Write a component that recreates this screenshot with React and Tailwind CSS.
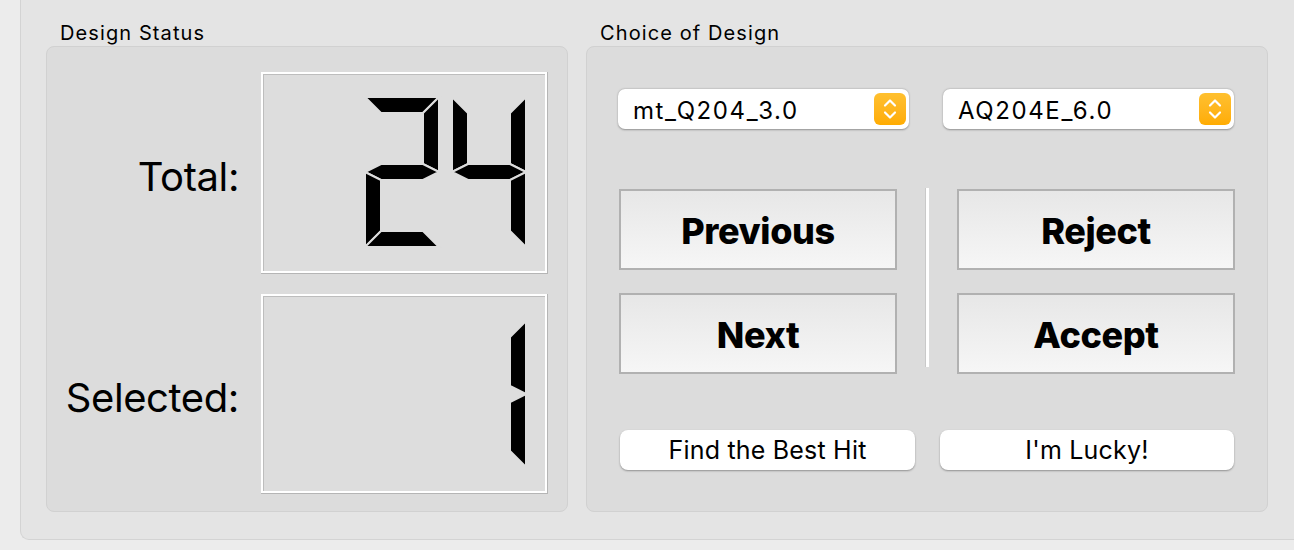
import React from "react";

// Seven-segment geometry (Qt LCD style): segments share 45° mitred ends.
function segments(x, y, W, H, t) {
  const m = y + H / 2;
  const h = t / 2;
  return {
    a: [[x, y], [x + W, y], [x + W - t, y + t], [x + t, y + t]],
    b: [[x + W, y], [x + W, m], [x + W - t, m - h], [x + W - t, y + t]],
    c: [[x + W, m], [x + W, y + H], [x + W - t, y + H - t], [x + W - t, m + h]],
    d: [[x, y + H], [x + t, y + H - t], [x + W - t, y + H - t], [x + W, y + H]],
    e: [[x, m], [x + t, m + h], [x + t, y + H - t], [x, y + H]],
    f: [[x, y], [x + t, y + t], [x + t, m - h], [x, m]],
    g: [[x, m], [x + t, m - h], [x + W - t, m - h], [x + W, m], [x + W - t, m + h], [x + t, m + h]],
  };
}

const DIGIT_SEGS = {
  0: "abcdef",
  1: "bc",
  2: "abged",
  3: "abgcd",
  4: "fbgc",
  5: "afgcd",
  6: "afgedc",
  7: "abc",
  8: "abcdefg",
  9: "abcdfg",
};

function Digit({ value, x, y, w, h }) {
  const segs = segments(x - 1, y - 1, w + 2, h + 2, 16);
  return (
    <g>
      {DIGIT_SEGS[value].split("").map((k) => (
        <polygon
          key={k}
          points={segs[k].map((p) => p.join(",")).join(" ")}
          fill="#000"
          stroke="#dddddd"
          strokeWidth="2"
          strokeLinejoin="miter"
        />
      ))}
    </g>
  );
}

function Lcd({ height, digits, digitH, top }) {
  const innerH = height - 6;
  return (
    <div className="w-[287px] border-r border-b border-[#b5b5b5]" style={{ height }}>
      <div className="h-full w-full border-2 border-white">
        <div className="h-full w-full border-t border-l border-[#bdbdbd] bg-[#dddddd]">
          <svg width="281" height={innerH} className="block">
            {digits.map((d, i) => (
              <Digit key={i} value={d.v} x={d.x - 3} y={top - 3} w={72} h={digitH} />
            ))}
          </svg>
        </div>
      </div>
    </div>
  );
}

function StatusRow({ label, children }) {
  return (
    <div className="flex items-center justify-end gap-[22px] pr-[19px]">
      <span className="mt-[7px] text-[40px] leading-none tracking-[-0.4px] text-black">{label}</span>
      {children}
    </div>
  );
}

function Stepper() {
  return (
    <div className="w-[32px] h-[32px] rounded-[6px] bg-linear-to-b from-[#ffc02e] to-[#ffac00] flex items-center justify-center">
      <svg width="32" height="32" viewBox="0 0 32 32" fill="none" stroke="#fff" strokeWidth="2.2" strokeLinecap="round" strokeLinejoin="round">
        <path d="M11 12.5 L16 7.5 L21 12.5" />
        <path d="M11 19.5 L16 24.5 L21 19.5" />
      </svg>
    </div>
  );
}

function Combo({ value }) {
  return (
    <div className="w-[291px] h-[40px] rounded-[7px] bg-white shadow-[0_0.5px_2px_rgba(0,0,0,0.35)] flex items-center justify-between pl-[15px] pr-[3px]">
      <span className="pt-[3px] text-[24px] tracking-[1.6px] text-black leading-none">{value}</span>
      <Stepper />
    </div>
  );
}

function BigButton({ children }) {
  return (
    <div className="w-[278px] h-[81px] border-2 border-[#b1b1b1] bg-linear-to-b from-[#e7e7e7] to-[#f6f6f6] flex items-center justify-center">
      <span className="pt-[2px] text-[36px] font-extrabold tracking-[-0.4px] text-black leading-none">{children}</span>
    </div>
  );
}

function PillButton({ width, children }) {
  return (
    <div
      className="h-[40px] rounded-[8px] bg-white shadow-[0_1px_2px_rgba(0,0,0,0.35)] flex items-center justify-center"
      style={{ width }}
    >
      <span className="text-[25px] tracking-[0.2px] text-black leading-none">{children}</span>
    </div>
  );
}

export default function App() {
  return (
    <div
      className="w-[1294px] h-[550px] bg-[#ececec] overflow-hidden"
      style={{ fontFamily: "Inter, 'Liberation Sans', sans-serif" }}
    >
      <div className="ml-[20px] h-[540px] bg-[#e4e4e4] border-l border-b border-[#d3d3d3] rounded-bl-[9px] flex gap-[18px] pl-[25px]">
        {/* Design Status */}
        <div className="w-[522px] flex flex-col">
          <div className="h-[46px] pt-[21px] pl-[14px] text-[20px] leading-[24px] tracking-[1.1px] text-black">
            Design Status
          </div>
          <div className="h-[466px] bg-[#dcdcdc] border border-[#d1d1d1] rounded-[8px] pt-[25px] flex flex-col gap-[20px]">
            <StatusRow label="Total:">
              <Lcd height={202} top={26} digitH={148} digits={[{ v: 2, x: 105 }, { v: 4, x: 192 }]} />
            </StatusRow>
            <StatusRow label="Selected:">
              <Lcd height={200} top={28} digitH={144} digits={[{ v: 1, x: 192 }]} />
            </StatusRow>
          </div>
        </div>

        {/* Choice of Design */}
        <div className="w-[682px] flex flex-col">
          <div className="h-[46px] pt-[21px] pl-[14px] text-[20px] leading-[24px] tracking-[1.1px] text-black">
            Choice of Design
          </div>
          <div className="h-[466px] bg-[#dcdcdc] border border-[#d1d1d1] rounded-[8px] flex flex-col">
            <div className="mt-[42px] pl-[31px] flex gap-[34px]">
              <Combo value="mt_Q204_3.0" />
              <Combo value="AQ204E_6.0" />
            </div>
            <div className="mt-[60px] pl-[32px] flex">
              <div className="flex flex-col gap-[23px]">
                <BigButton>Previous</BigButton>
                <BigButton>Next</BigButton>
              </div>
              <div className="ml-[28px] -mt-[1px] w-[4px] h-[179px] border-l border-[#c9c9c9] bg-white" />
              <div className="ml-[28px] flex flex-col gap-[23px]">
                <BigButton>Reject</BigButton>
                <BigButton>Accept</BigButton>
              </div>
            </div>
            <div className="mt-[56px] pl-[33px] flex gap-[25px]">
              <PillButton width={295}>Find the Best Hit</PillButton>
              <PillButton width={294}>I'm Lucky!</PillButton>
            </div>
          </div>
        </div>
      </div>
    </div>
  );
}
